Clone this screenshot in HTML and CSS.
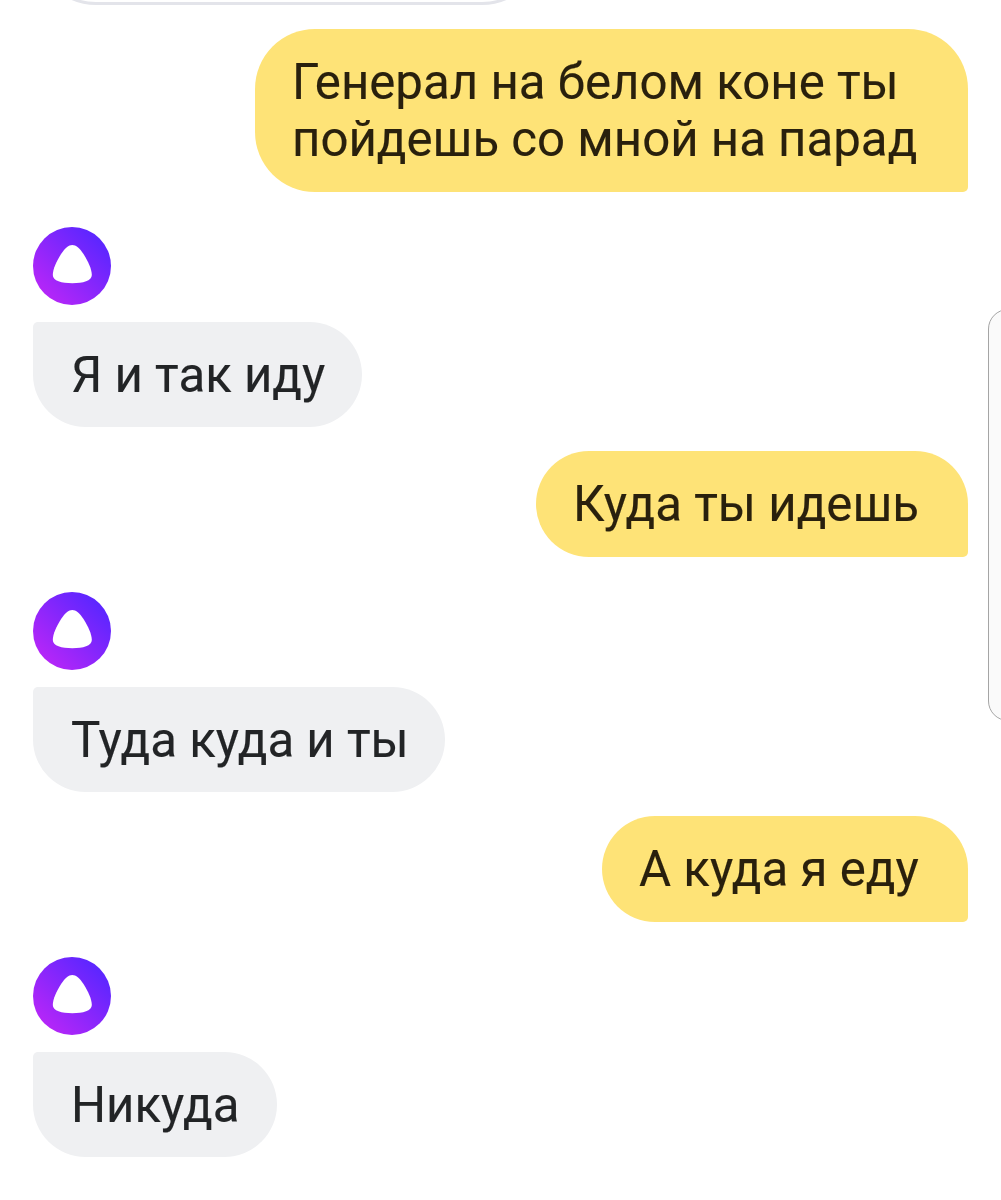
FILE: index.html
```html
<!DOCTYPE html>
<html lang="ru">
<head>
<meta charset="utf-8">
<title>Чат</title>
<link rel="stylesheet" href="styles.css">
</head>
<body>
<svg class="defs" width="0" height="0" aria-hidden="true">
  <defs>
    <linearGradient id="violet" x1="0.15" y1="0.85" x2="0.85" y2="0.15">
      <stop offset="0" stop-color="#b426f8"/>
      <stop offset="1" stop-color="#5c26ff"/>
    </linearGradient>
    <symbol id="alice" viewBox="0 0 78 78">
      <circle cx="39" cy="39" r="39" fill="url(#violet)"/>
      <path d="M39.300 18C43 18 46.500 21 50.500 27C55 34 58.800 42 58.800 48C58.800 54 50 56.200 39.300 56.200S19.800 54 19.800 48C19.800 42 23.600 34 28.100 27C32.100 21 35.600 18 39.300 18Z" fill="#fff"/>
    </symbol>
  </defs>
</svg>
<main class="chat">
  <div class="previous"></div>
  <p class="bubble user long">Генерал на белом коне ты<br>пойдешь со мной на парад</p>
  <svg class="avatar"><use href="#alice"/></svg>
  <p class="bubble bot w1">Я и так иду</p>
  <p class="bubble user w2">Куда ты идешь</p>
  <svg class="avatar"><use href="#alice"/></svg>
  <p class="bubble bot w3">Туда куда и ты</p>
  <p class="bubble user w4">А куда я еду</p>
  <svg class="avatar"><use href="#alice"/></svg>
  <p class="bubble bot w5">Никуда</p>
  <div class="edge-panel"></div>
</main>
</body>
</html>
```
FILE: styles.css
```css
body { margin: 0; background: #fff; }
.defs { position: absolute; }
.chat {
  position: relative;
  box-sizing: border-box;
  width: 1001px;
  height: 1200px;
  padding: 0 33px;
  overflow: hidden;
  display: flex;
  flex-direction: column;
  align-items: flex-start;
  font: 49.2px/57px Roboto, sans-serif;
  color: #222426;
}
.previous {
  position: absolute;
  box-sizing: border-box;
  left: 36px;
  top: -136px;
  width: 506px;
  height: 141px;
  border: 3px solid #e3e4ea;
  border-radius: 60px;
}
.bubble {
  box-sizing: border-box;
  flex: none;
  height: 105px;
  margin: 0;
  padding: 25px 37px;
  white-space: nowrap;
  -webkit-text-stroke: 0.15px;
}
.user {
  align-self: flex-end;
  background: #fee377;
  color: #29200d;
  border-radius: 53px 53px 5px 53px;
  height: 106px;
  margin-top: 24px;
}
.bot {
  background: #eff0f2;
  border-radius: 5px 53px 53px 53px;
  padding: 24.500px 38px;
  margin-top: 17px;
}
.long {
  width: 713px;
  height: 163px;
  margin-top: 29px;
  border-radius: 60px 60px 5px 60px;
}
.w1 { width: 329px; }
.w2 { width: 432px; }
.w3 { width: 412px; }
.w4 { width: 366px; }
.w5 { width: 244px; }
.avatar { flex: none; display: block; width: 78px; height: 78px; margin-top: 35px; }
.edge-panel {
  position: absolute;
  left: 988px;
  top: 309px;
  width: 40px;
  height: 410px;
  border: 1px solid #a5a5a5;
  border-radius: 20px;
  background: #fafafa;
}
```
